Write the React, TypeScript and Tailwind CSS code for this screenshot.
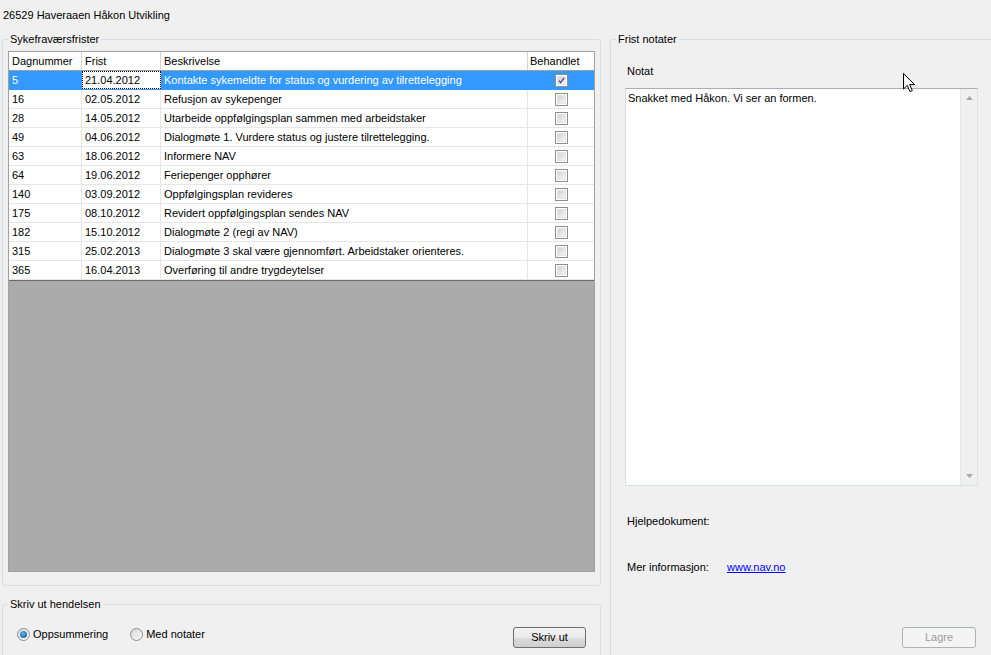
import React from 'react';

// Rows of the deadline grid
interface Frist {
  dag: number;
  dato: string;
  tekst: string;
  behandlet: boolean;
}

const frister: Frist[] = [
  { dag: 5, dato: '21.04.2012', tekst: 'Kontakte sykemeldte for status og vurdering av tilrettelegging', behandlet: true },
  { dag: 16, dato: '02.05.2012', tekst: 'Refusjon av sykepenger', behandlet: false },
  { dag: 28, dato: '14.05.2012', tekst: 'Utarbeide oppfølgingsplan sammen med arbeidstaker', behandlet: false },
  { dag: 49, dato: '04.06.2012', tekst: 'Dialogmøte 1. Vurdere status og justere tilrettelegging.', behandlet: false },
  { dag: 63, dato: '18.06.2012', tekst: 'Informere NAV', behandlet: false },
  { dag: 64, dato: '19.06.2012', tekst: 'Feriepenger opphører', behandlet: false },
  { dag: 140, dato: '03.09.2012', tekst: 'Oppfølgingsplan revideres', behandlet: false },
  { dag: 175, dato: '08.10.2012', tekst: 'Revidert oppfølgingsplan sendes NAV', behandlet: false },
  { dag: 182, dato: '15.10.2012', tekst: 'Dialogmøte 2 (regi av NAV)', behandlet: false },
  { dag: 315, dato: '25.02.2013', tekst: 'Dialogmøte 3 skal være gjennomført. Arbeidstaker orienteres.', behandlet: false },
  { dag: 365, dato: '16.04.2013', tekst: 'Overføring til andre trygdeytelser', behandlet: false },
];

const CheckBox: React.FC<{ checked: boolean }> = ({ checked }) => (
  <div className="w-[13px] h-[13px] border border-[#8f8f8f] bg-white p-[1px]">
    <div className="w-full h-full border border-[#e4e4e4] bg-[linear-gradient(135deg,#d2d2d2,#f6f6f6)] flex items-center justify-center">
      {checked && (
        <svg width="9" height="9" viewBox="0 0 9 9">
          <path d="M1.2 4.6 L3.4 7.2 L7.8 1.2" fill="none" stroke="#3c4f8f" strokeWidth="1.7" />
        </svg>
      )}
    </div>
  </div>
);

const Radio: React.FC<{ checked: boolean; label: string }> = ({ checked, label }) => (
  <div className="flex items-center">
    <div className="w-[13px] h-[13px] rounded-full border border-[#8f8f8f] bg-[linear-gradient(135deg,#d6d6d6,#fbfbfb)] flex items-center justify-center">
      {checked && (
        <div className="w-[7px] h-[7px] rounded-full bg-[radial-gradient(circle_at_40%_35%,#5fb4e8,#0f4f8f)]" />
      )}
    </div>
    <span className="ml-[3px] leading-[13px]">{label}</span>
  </div>
);

const App: React.FC = () => {
  return (
    <div className="relative w-[991px] h-[655px] overflow-hidden bg-[#f0f0f0] text-[11px] text-black font-['Liberation_Sans',Arial,sans-serif]">
      <div className="flex">
        {/* Left column */}
        <div className="w-[599px] ml-[2px] shrink-0 flex flex-col">
          <div className="pt-[9px] pl-[1px] h-[33px] leading-[13px]">26529 Haveraaen Håkon Utvikling</div>

          <fieldset className="border border-[#d5dfe5] rounded-[3px] p-0 m-0 min-w-0">
            <legend className="ml-[5px] px-[2px] leading-[13px]">Sykefraværsfrister</legend>
            <div className="pt-[5px] pl-[5px] pr-[5px] pb-[13px]">
              <div className="h-[521px] border border-[#a0a0a0] bg-[#ababab] flex flex-col">
                {/* Header */}
                <div className="flex h-[19px] shrink-0 bg-white border-b border-[#a0a0a0] leading-[18px]">
                  <div className="w-[73px] pl-[3px] border-r border-[#d5d5d5]">Dagnummer</div>
                  <div className="w-[79px] pl-[3px] border-r border-[#d5d5d5]">Frist</div>
                  <div className="w-[367px] pl-[3px] border-r border-[#d5d5d5]">Beskrivelse</div>
                  <div className="flex-1 pl-[2px]">Behandlet</div>
                </div>
                {/* Rows */}
                {frister.map((f, i) => {
                  const valgt = i === 0;
                  return (
                    <div
                      key={f.dag}
                      className={`flex h-[19px] shrink-0 border-b leading-[18px] ${valgt ? 'bg-[#3399ff] text-white border-[#3399ff]' : 'bg-white border-[#e6e6e6]'}`}
                    >
                      <div className={`w-[73px] pl-[3px] border-r ${valgt ? 'border-[#3399ff]' : 'border-[#e6e6e6]'}`}>{f.dag}</div>
                      <div
                        className={`w-[79px] pl-[3px] border-r ${valgt ? 'bg-white text-black border-white outline-1 outline-dotted outline-black -outline-offset-1' : 'border-[#e6e6e6]'}`}
                      >
                        {f.dato}
                      </div>
                      <div className={`w-[367px] pl-[3px] border-r whitespace-nowrap overflow-hidden ${valgt ? 'border-[#3399ff]' : 'border-[#e6e6e6]'}`}>{f.tekst}</div>
                      <div className="flex-1 flex items-center justify-center">
                        <CheckBox checked={f.behandlet} />
                      </div>
                    </div>
                  );
                })}
                <div className="flex-1 border-t border-[#696969]" />
              </div>
            </div>
          </fieldset>

          <fieldset className="mt-[12px] h-[90px] border border-[#d5dfe5] rounded-[3px] p-0 m-0 min-w-0">
            <legend className="ml-[5px] px-[2px] leading-[13px]">Skriv ut hendelsen</legend>
            <div className="pt-[16px] pl-[14px] pr-[14px] flex items-start justify-between">
              <div className="mt-[1px] flex items-center gap-[22px]">
                <Radio checked label="Oppsummering" />
                <Radio checked={false} label="Med notater" />
              </div>
              <button className="w-[73px] h-[21px] border border-[#707070] rounded-[3px] bg-[linear-gradient(#f2f2f2_0%,#ebebeb_50%,#dddddd_51%,#cfcfcf_100%)] leading-[19px] text-center">
                Skriv ut
              </button>
            </div>
          </fieldset>
        </div>

        {/* Right column */}
        <fieldset className="ml-[9px] mt-[33px] w-[385px] h-[640px] shrink-0 border border-[#d5dfe5] rounded-[3px] p-0 m-0 min-w-0">
          <legend className="ml-[5px] px-[2px] leading-[13px]">Frist notater</legend>
          <div className="pt-[19px] pl-[14px]">
            <div className="pl-[2px] leading-[13px]">Notat</div>
            <div className="mt-[10px] w-[353px] h-[398px] bg-white border border-[#dbdfe6] border-t-[#abadb3] flex">
              <div className="flex-1 pl-[2px] pt-[3px] leading-[13px]">Snakket med Håkon. Vi ser an formen.</div>
              <div className="w-[17px] bg-[#f0f0f0] border-l border-[#e6e6e6] flex flex-col items-center justify-between py-[7px]">
                <svg width="7" height="4" viewBox="0 0 7 4">
                  <path d="M0 4 L3.5 0 L7 4 Z" fill="#a8a8a8" />
                </svg>
                <svg width="7" height="4" viewBox="0 0 7 4">
                  <path d="M0 0 L3.5 4 L7 0 Z" fill="#a8a8a8" />
                </svg>
              </div>
            </div>
            <div className="mt-[29px] pl-[2px] leading-[13px]">Hjelpedokument:</div>
            <div className="mt-[33px] pl-[2px] leading-[13px] flex">
              <span className="w-[100px]">Mer informasjon:</span>
              <span className="text-[#0000ff] underline">www.nav.no</span>
            </div>
            <div className="mt-[53px] w-[351px] flex justify-end">
              <button className="w-[74px] h-[21px] border border-[#adb2b5] rounded-[3px] bg-[#f4f4f4] text-[#9d9d9d] leading-[19px] text-center">
                Lagre
              </button>
            </div>
          </div>
        </fieldset>
      </div>

      {/* Mouse pointer captured in the screenshot */}
      <svg className="absolute left-[903px] top-[73px]" width="13" height="20" viewBox="0 0 13 20">
        <path d="M0.5 0.5 L0.5 16 L4.3 12.4 L7 18.6 L9.3 17.6 L6.7 11.6 L11.6 11.6 Z" fill="#fff" stroke="#000" strokeWidth="1" strokeLinejoin="miter" />
      </svg>
    </div>
  );
};

export default App;
